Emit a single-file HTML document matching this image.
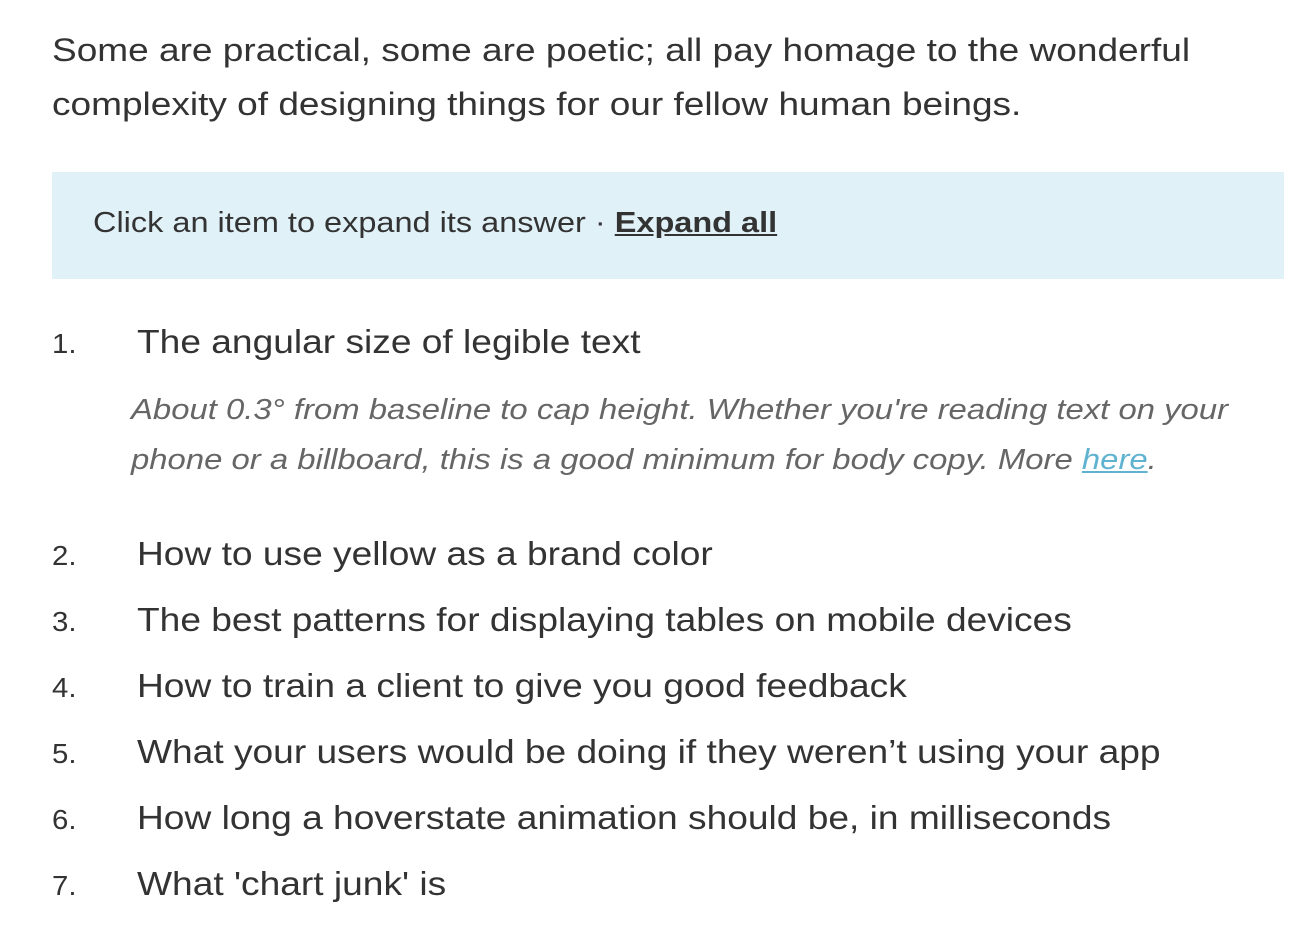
<!DOCTYPE html>
<html><head><meta charset="utf-8"><style>
body{margin:0;background:#fff;color:#333;font-family:"Liberation Sans",sans-serif;width:1308px;height:928px;overflow:hidden;position:relative}
.a{position:absolute;white-space:nowrap;line-height:1;transform-origin:0 50%}
.p{font-size:32px;left:52px;color:#333;transform:scaleX(1.157)}
.banner{position:absolute;left:52px;top:172px;width:1232px;height:107px;background:#e0f1f8}
.b{font-size:29px;left:93px;top:209px;color:#333;transform:scaleX(1.12)}
.b b{text-decoration:underline;color:#333}
.n{font-size:28px;left:52px;color:#333;transform:scaleX(1.05)}
.h{font-size:33px;left:137px;color:#333;transform:scaleX(1.125)}
.i{font-size:29px;left:131px;font-style:italic;color:#666;transform:scaleX(1.133)}
.i a{color:#5fb3d0;text-decoration:underline}
</style></head><body>
<div class="a p" style="top:34px">Some are practical, some are poetic; all pay homage to the wonderful</div>
<div class="a p" style="top:88px">complexity of designing things for our fellow human beings.</div>
<div class="banner"></div>
<div class="a b">Click an item to expand its answer · <b>Expand all</b></div>
<div class="a n" style="top:330px">1.</div><div class="a h" style="top:325px">The angular size of legible text</div>
<div class="a i" style="top:396px">About 0.3° from baseline to cap height. Whether you're reading text on your</div>
<div class="a i" style="top:446px">phone or a billboard, this is a good minimum for body copy. More <a>here</a>.</div>
<div class="a n" style="top:542px">2.</div><div class="a h" style="top:537px">How to use yellow as a brand color</div>
<div class="a n" style="top:608px">3.</div><div class="a h" style="top:603px">The best patterns for displaying tables on mobile devices</div>
<div class="a n" style="top:674px">4.</div><div class="a h" style="top:669px">How to train a client to give you good feedback</div>
<div class="a n" style="top:740px">5.</div><div class="a h" style="top:735px">What your users would be doing if they weren’t using your app</div>
<div class="a n" style="top:806px">6.</div><div class="a h" style="top:801px">How long a hoverstate animation should be, in milliseconds</div>
<div class="a n" style="top:872px">7.</div><div class="a h" style="top:867px">What 'chart junk' is</div>
</body></html>
